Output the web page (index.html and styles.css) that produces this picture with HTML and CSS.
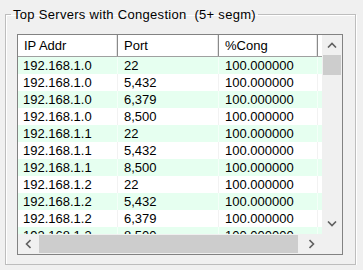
FILE: index.html
```html
<!DOCTYPE html>
<html>
<head>
<meta charset="utf-8">
<link rel="stylesheet" href="styles.css">
</head>
<body>
<fieldset class="group">
  <legend class="group-title">Top Servers with Congestion&nbsp; (5+ segm)</legend>
  <div class="listview">
    <div class="viewport">
      <div class="lv-header">
        <div class="hcell c1">IP Addr</div>
        <div class="hcell c2">Port</div>
        <div class="hcell c3">%Cong</div>
      </div>
      <div class="lv-rows">
        <div class="row alt"><span class="cell c1">192.168.1.0</span><span class="cell c2">22</span><span class="cell c3">100.000000</span></div>
        <div class="row"><span class="cell c1">192.168.1.0</span><span class="cell c2">5,432</span><span class="cell c3">100.000000</span></div>
        <div class="row alt"><span class="cell c1">192.168.1.0</span><span class="cell c2">6,379</span><span class="cell c3">100.000000</span></div>
        <div class="row"><span class="cell c1">192.168.1.0</span><span class="cell c2">8,500</span><span class="cell c3">100.000000</span></div>
        <div class="row alt"><span class="cell c1">192.168.1.1</span><span class="cell c2">22</span><span class="cell c3">100.000000</span></div>
        <div class="row"><span class="cell c1">192.168.1.1</span><span class="cell c2">5,432</span><span class="cell c3">100.000000</span></div>
        <div class="row alt"><span class="cell c1">192.168.1.1</span><span class="cell c2">8,500</span><span class="cell c3">100.000000</span></div>
        <div class="row"><span class="cell c1">192.168.1.2</span><span class="cell c2">22</span><span class="cell c3">100.000000</span></div>
        <div class="row alt"><span class="cell c1">192.168.1.2</span><span class="cell c2">5,432</span><span class="cell c3">100.000000</span></div>
        <div class="row"><span class="cell c1">192.168.1.2</span><span class="cell c2">6,379</span><span class="cell c3">100.000000</span></div>
        <div class="row alt"><span class="cell c1">192.168.1.3</span><span class="cell c2">8,500</span><span class="cell c3">100.000000</span></div>
      </div>
    </div>
    <div class="vscroll">
      <div class="sbtn"><svg width="10" height="6" viewBox="0 0 10 6"><polyline points="1,5.5 5,1.5 9,5.5" fill="none" stroke="#606060" stroke-width="1.6"/></svg></div>
      <div class="vthumb"></div>
      <div class="vtrack"></div>
      <div class="sbtn"><svg width="10" height="6" viewBox="0 0 10 6"><polyline points="1,0.5 5,4.5 9,0.5" fill="none" stroke="#606060" stroke-width="1.6"/></svg></div>
    </div>
    <div class="hscroll">
      <div class="sbtn"><svg width="6" height="10" viewBox="0 0 6 10"><polyline points="5.5,1 1.5,5 5.5,9" fill="none" stroke="#606060" stroke-width="1.6"/></svg></div>
      <div class="hthumb"></div>
      <div class="sbtn"><svg width="6" height="10" viewBox="0 0 6 10"><polyline points="0.5,1 4.5,5 0.5,9" fill="none" stroke="#606060" stroke-width="1.6"/></svg></div>
    </div>
    <div class="corner"></div>
  </div>
</fieldset>
</body>
</html>
```

FILE: styles.css
```css
html, body {
  margin: 0;
  padding: 0;
  background: #f0f0f0;
}
body {
  padding: 7px 0 0 5px;
  font-family: "Liberation Sans", Arial, sans-serif;
  font-size: 13px;
  color: #000;
}
.group {
  box-sizing: border-box;
  width: 351px;
  height: 258px;
  margin: 0;
  padding: 12px 0 0 11px;
  border: 1px solid #bdbdbd;
  box-shadow: inset 1px 1px 0 #fff, 1px 1px 0 #fff;
}
.group-title {
  margin-left: -6px;
  padding: 0 2px;
  line-height: 15px;
  height: 15px;
  letter-spacing: 0.3px;
}
.listview {
  box-sizing: border-box;
  width: 326px;
  height: 221px;
  border: 1px solid #828282;
  background: #fff;
  display: grid;
  grid-template-columns: 304px 20px;
  grid-template-rows: 199px 20px;
}
.viewport {
  overflow: hidden;
  background: #fff;
}
.lv-header {
  display: flex;
  height: 21px;
  border-bottom: 1px solid #a0a0a0;
  background: #fff;
}
.hcell {
  box-sizing: border-box;
  line-height: 21px;
  padding-left: 6px;
  border-right: 1px solid #8a8a8a;
  box-shadow: inset -1px 0 0 #e5e5e5;
}
.c1 { width: 100px; }
.c2 { width: 101px; }
.c3 { width: 99px; }
.row {
  display: flex;
  height: 17px;
  line-height: 17px;
}
.row.alt { background: #e6fff0; }
.cell {
  box-sizing: border-box;
  padding-left: 5px;
  border-right: 1px solid #f2f2f2;
  white-space: nowrap;
}
.row.alt .cell { border-right-color: #f4fff8; }
.cell.c2, .cell.c3 { padding-left: 6px; }
.vscroll {
  display: flex;
  flex-direction: column;
  background: #f0f0f0;
}
.sbtn {
  flex: none;
  width: 20px;
  height: 20px;
  display: flex;
  align-items: center;
  justify-content: center;
}
.vthumb {
  flex: none;
  height: 20px;
  margin: 0 1px;
  background: #cdcdcd;
}
.vtrack { flex: 1; }
.hscroll {
  display: flex;
  background: #f0f0f0;
  align-items: stretch;
}
.hthumb {
  flex: 1;
  margin: 1px 4px 1px 1px;
  background: #cdcdcd;
}
.corner { background: #f0f0f0; }
```
